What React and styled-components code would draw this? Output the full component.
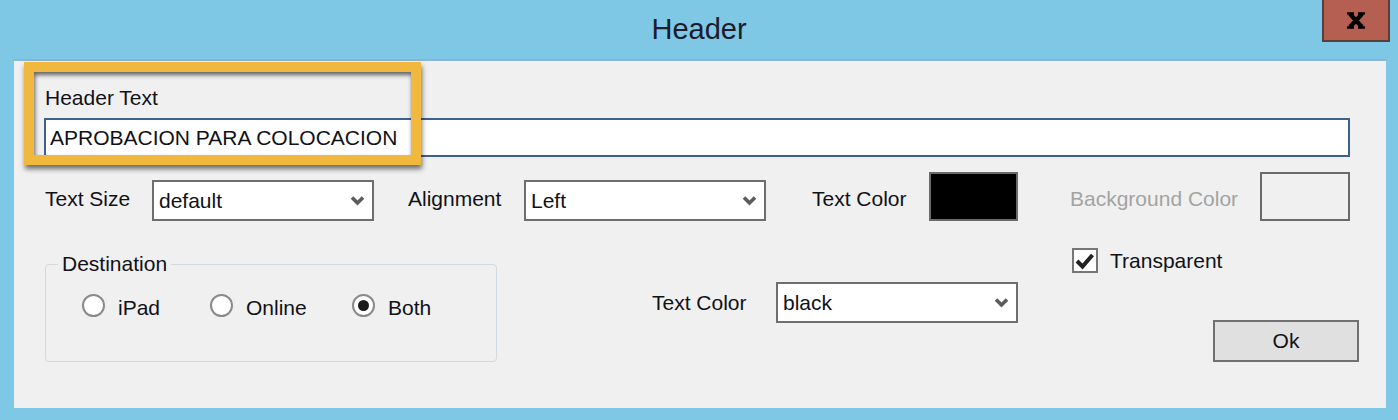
import React from "react";
import styled, { createGlobalStyle } from "styled-components";

const GlobalStyle = createGlobalStyle`
  html, body {
    margin: 0;
    padding: 0;
    width: 1398px;
    height: 420px;
    overflow: hidden;
    background: #7ec8e6;
  }
  * { box-sizing: border-box; }
`;

const font = `"Liberation Sans", Arial, sans-serif`;

const Window = styled.div`
  width: 1398px;
  height: 420px;
  display: flex;
  flex-direction: column;
  background: #7ec8e6;
  font-family: ${font};
  font-size: 21px;
  color: #111118;
`;

const TitleBar = styled.div`
  height: 59px;
  display: grid;
  grid-template-columns: 1fr auto 1fr;
  align-items: start;
`;

const Title = styled.div`
  grid-column: 2;
  margin-top: 12px;
  font-size: 29px;
  line-height: 34px;
  color: #1b1b2b;
`;

const CloseButton = styled.div`
  grid-column: 3;
  justify-self: end;
  margin-right: 8px;
  width: 68px;
  height: 42px;
  background: #b55f52;
  border: 2px solid #573f3b;
  border-top: none;
  display: flex;
  align-items: center;
  justify-content: center;
`;

const Client = styled.div`
  position: relative;
  margin: 0 12px 12px 14px;
  height: 349px;
  background: #f0f0f0;
  border-top: 2px solid #8db4d2;
  display: flex;
  flex-direction: column;
`;

const Highlight = styled.div`
  position: absolute;
  left: 10px;
  top: 1px;
  width: 397px;
  height: 103px;
  border: 10px solid #f0b83c;
  box-shadow: 1px 4px 5px rgba(0, 0, 0, 0.55),
    inset 1px 3px 4px rgba(0, 0, 0, 0.6);
  pointer-events: none;
`;

const HeaderField = styled.div`
  padding: 0 36px 0 30px;
  margin-top: 25px;
  display: flex;
  flex-direction: column;
`;

const FieldLabel = styled.div`
  line-height: 24px;
  padding-left: 1px;
  margin-bottom: 8px;
`;

const TextInput = styled.input`
  height: 39px;
  width: 100%;
  border: 2px solid #3c6190;
  background: #fff;
  padding: 0 4px;
  font-family: ${font};
  font-size: 21px;
  color: #111118;
  outline: none;
`;

const StyleRow = styled.div`
  margin-top: 15px;
  padding-left: 31px;
  display: flex;
  align-items: flex-end;
  height: 49px;
`;

const Label = styled.div`
  flex: none;
  width: ${(p) => p.$width}px;
  margin-left: ${(p) => p.$left || 0}px;
  margin-bottom: ${(p) => p.$bottom || 0}px;
  margin-top: ${(p) => p.$top || 0}px;
  line-height: 24px;
  color: ${(p) => (p.$disabled ? "#a3a3a3" : "#111118")};
  white-space: nowrap;
`;

const Combo = styled.div`
  flex: none;
  width: ${(p) => p.$width}px;
  height: 41px;
  margin-top: ${(p) => p.$top || 0}px;
  border: 2px solid #6e6e6e;
  background: #fff;
  display: flex;
  align-items: center;
  justify-content: space-between;
  padding: 0 7px 0 5px;
  line-height: 24px;
`;

const Swatch = styled.div`
  flex: none;
  width: ${(p) => p.$width}px;
  height: 49px;
  margin-left: ${(p) => p.$left || 0}px;
  border: 2px solid #6a6a6a;
  background: ${(p) => p.$color};
`;

const BottomRow = styled.div`
  margin-top: 27px;
  display: flex;
  align-items: flex-start;
`;

const Group = styled.fieldset`
  flex: none;
  margin: 4px 0 0 31px;
  width: 452px;
  height: 110px;
  border: 1px solid #d2d9df;
  border-radius: 4px;
  padding: 0 0 0 12px;
  min-inline-size: 0;
`;

const Legend = styled.legend`
  padding: 0 4px;
  line-height: 24px;
  font-size: 21px;
  color: #111118;
`;

const RadioRow = styled.div`
  display: flex;
  align-items: flex-start;
  margin-top: 18px;
  padding-left: 24px;
`;

const RadioOption = styled.div`
  flex: none;
  width: ${(p) => (p.$width ? `${p.$width}px` : "auto")};
  display: flex;
  align-items: flex-start;
  gap: 13px;
`;

const RadioCircle = styled.div`
  width: 23px;
  height: 23px;
  border-radius: 50%;
  border: 2px solid #8a8a8a;
  background: #fff;
  display: flex;
  align-items: center;
  justify-content: center;
  &::after {
    content: "";
    display: ${(p) => (p.$checked ? "block" : "none")};
    width: 11px;
    height: 11px;
    border-radius: 50%;
    background: #1c1c1c;
  }
`;

const RadioText = styled.span`
  line-height: 24px;
  margin-top: 2px;
`;

const RightColumn = styled.div`
  flex: none;
  margin-left: 54px;
  width: 287px;
  display: flex;
  flex-direction: column;
`;

const CheckRow = styled.div`
  display: flex;
  align-items: center;
  gap: 12px;
  height: 25px;
`;

const CheckBox = styled.div`
  width: 26px;
  height: 25px;
  border: 2px solid #767676;
  background: #fff;
  display: flex;
  align-items: center;
  justify-content: center;
`;

const OkButton = styled.div`
  align-self: flex-end;
  margin-top: 47px;
  width: 146px;
  height: 42px;
  background: #e0e0e0;
  border: 2px solid #707070;
  display: flex;
  align-items: center;
  justify-content: center;
  line-height: 24px;
`;

const Chevron = () => (
  <svg width="15" height="11" viewBox="0 0 15 11">
    <path d="M2 2.5 L7.5 8 L13 2.5" fill="none" stroke="#5c5c5c" strokeWidth="3.6" />
  </svg>
);

const CloseIcon = () => (
  <svg width="20" height="17" viewBox="0 0 20 17">
    <path d="M4 2 L16 15 M16 2 L4 15" stroke="#000" strokeWidth="4.2" />
    <path d="M1 1.5 H8 M12 1.5 H19 M1 15.5 H8 M12 15.5 H19" stroke="#000" strokeWidth="2.4" />
  </svg>
);

const CheckIcon = () => (
  <svg width="20" height="18" viewBox="0 0 20 18">
    <path d="M2 9 L7.5 14.5 L17.5 3" fill="none" stroke="#222" strokeWidth="4" />
  </svg>
);

export default function App() {
  return (
    <>
      <GlobalStyle />
      <Window>
        <TitleBar>
          <Title>Header</Title>
          <CloseButton>
            <CloseIcon />
          </CloseButton>
        </TitleBar>
        <Client>
          <Highlight />
          <HeaderField>
            <FieldLabel>Header Text</FieldLabel>
            <TextInput readOnly value="APROBACION PARA COLOCACION" />
          </HeaderField>
          <StyleRow>
            <Label $width={107} $bottom={10}>Text Size</Label>
            <Combo $width={222}>
              <span>default</span>
              <Chevron />
            </Combo>
            <Label $width={116} $left={34} $bottom={10}>Alignment</Label>
            <Combo $width={242}>
              <span>Left</span>
              <Chevron />
            </Combo>
            <Label $width={117} $left={46} $bottom={10}>Text Color</Label>
            <Swatch $width={89} $color="#000" />
            <Label $width={190} $left={52} $bottom={10} $disabled>
              Background Color
            </Label>
            <Swatch $width={90} $color="transparent" />
          </StyleRow>
          <BottomRow>
            <Group>
              <Legend>Destination</Legend>
              <RadioRow>
                <RadioOption $width={128}>
                  <RadioCircle />
                  <RadioText>iPad</RadioText>
                </RadioOption>
                <RadioOption $width={142}>
                  <RadioCircle />
                  <RadioText>Online</RadioText>
                </RadioOption>
                <RadioOption>
                  <RadioCircle $checked />
                  <RadioText>Both</RadioText>
                </RadioOption>
              </RadioRow>
            </Group>
            <Label $width={124} $left={155} $top={43}>Text Color</Label>
            <Combo $width={242} $top={34}>
              <span>black</span>
              <Chevron />
            </Combo>
            <RightColumn>
              <CheckRow>
                <CheckBox>
                  <CheckIcon />
                </CheckBox>
                <span>Transparent</span>
              </CheckRow>
              <OkButton>Ok</OkButton>
            </RightColumn>
          </BottomRow>
        </Client>
      </Window>
    </>
  );
}
